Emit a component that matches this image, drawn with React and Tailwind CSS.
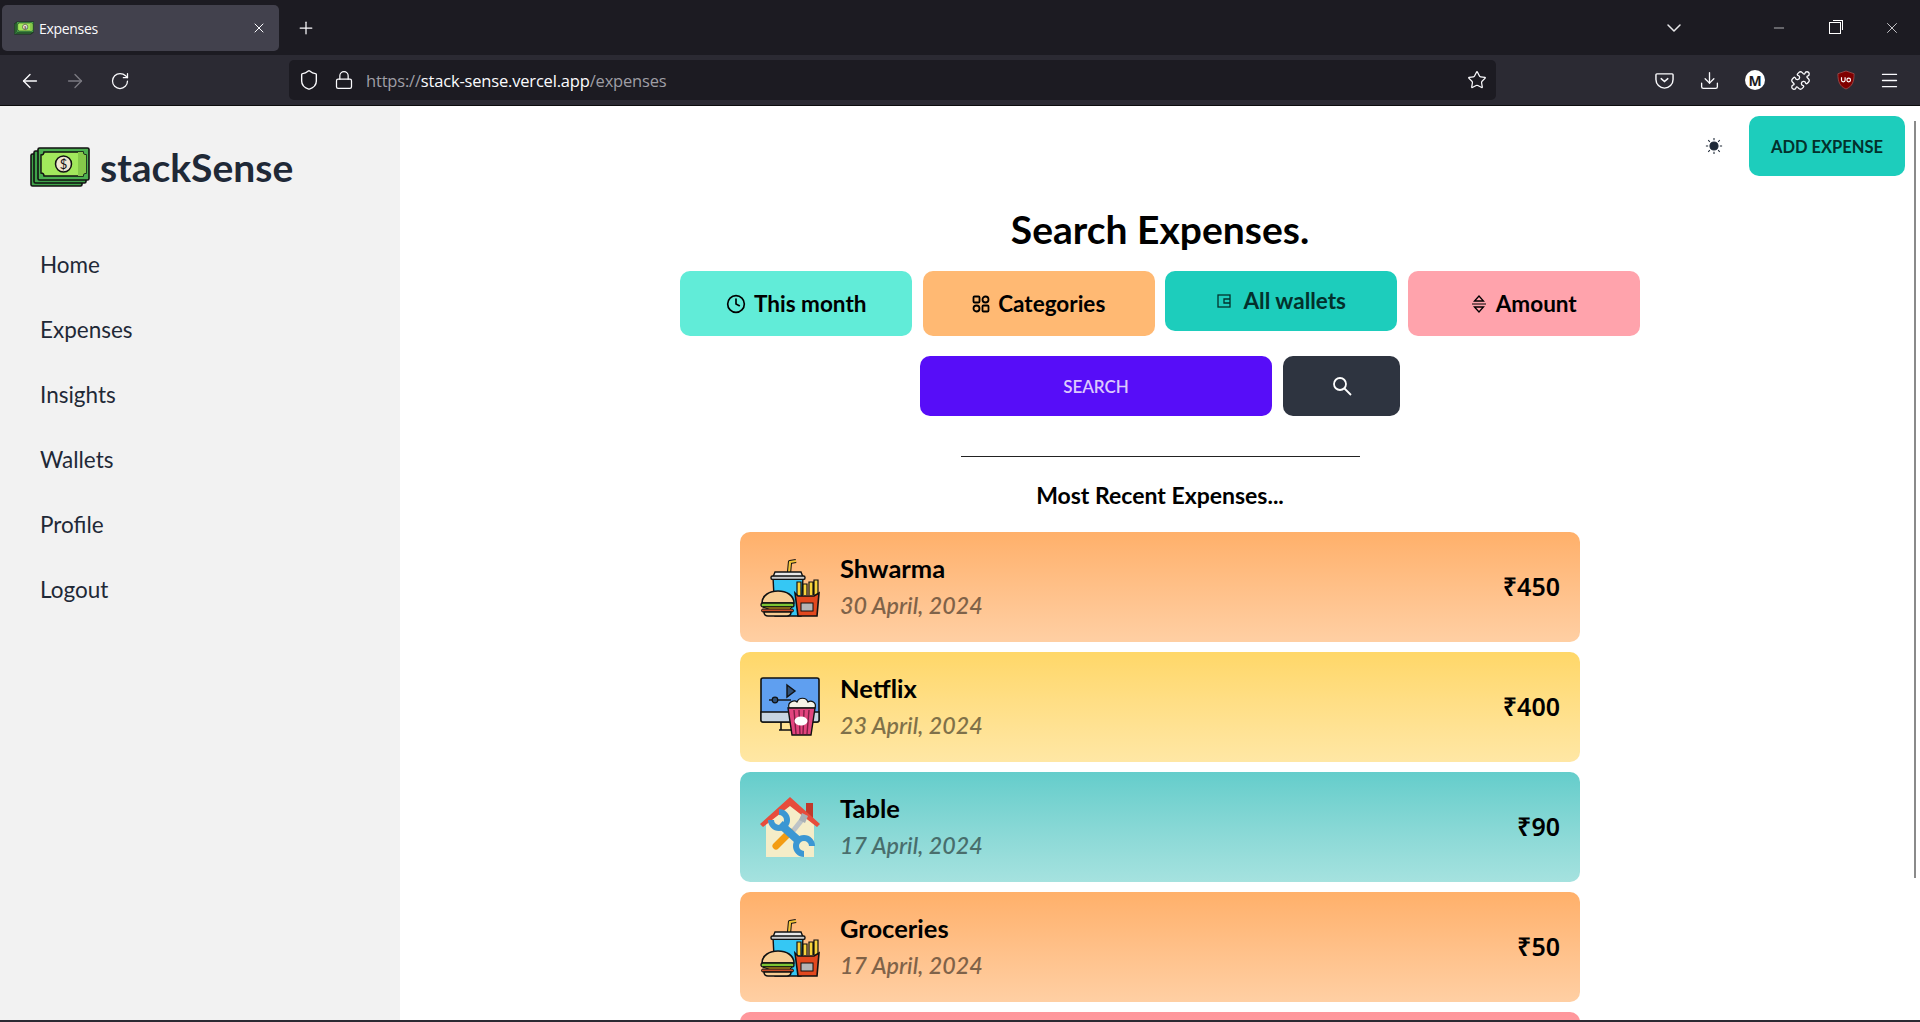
import { ArrowLeft, ArrowRight, RotateCw, Shield, Lock, Star, Download, Puzzle, Menu, ChevronDown, Minus, X, Plus, Clock } from "lucide-react";

const MoneyIcon = ({ className }) => (
  <svg viewBox="0 0 60 40" className={className}>
    <rect x="1" y="7" width="51" height="32" rx="1.500" fill="#3fa34a" stroke="#111" strokeWidth="1.600" />
    <rect x="4" y="4" width="52" height="32" rx="1.500" fill="#3fa34a" stroke="#111" strokeWidth="1.600" />
    <rect x="8" y="1" width="51" height="32" rx="1.500" fill="#4caf50" stroke="#111" strokeWidth="1.600" />
    <path d="M14 5h39a3 3 0 0 0 3 3v18a3 3 0 0 0-3 3H14a3 3 0 0 0-3-3V8a3 3 0 0 0 3-3z" fill="#a2e85c" stroke="#111" strokeWidth="1.400" />
    <path d="M48 5h5a3 3 0 0 0 3 3v18a3 3 0 0 0-3 3h-5z" fill="#86c94a" />
    <circle cx="33.500" cy="17" r="8" fill="#efe6d2" stroke="#111" strokeWidth="1.500" />
    <text x="33.500" y="22" textAnchor="middle" fontSize="13" fontFamily="Lato, sans-serif" fill="#111">$</text>
  </svg>
);

const FoodIcon = () => (
  <svg viewBox="0 0 60 60" className="w-[60px] h-[60px] shrink-0">
    <path d="M29 16l1-11 6-1" fill="none" stroke="#111" strokeWidth="4.200" strokeLinejoin="round" />
    <path d="M29 16l1-11 6-1" fill="none" stroke="#f5c63a" strokeWidth="2.200" strokeLinejoin="round" />
    <path d="M13 20h30l-2 39H15z" fill="#35c7f4" stroke="#111" strokeWidth="1.400" />
    <path d="M13 20l2-5h26l2 5z" fill="#e8e8e8" stroke="#111" strokeWidth="1.400" />
    <rect x="11" y="19" width="34" height="3.400" rx="1.500" fill="#cfcfcf" stroke="#111" strokeWidth="1.400" />
    <path d="M37 38V25h4v13M43 38V27h4v11M49 38V25h4v13M54 38V23h4v15" fill="#f8d33c" stroke="#111" strokeWidth="1.200" />
    <path d="M35 36l3 3h16l5-3-2 23H38z" fill="#e2491f" stroke="#111" strokeWidth="1.600" />
    <rect x="41" y="46" width="12" height="8" fill="#b5b5b5" stroke="#111" strokeWidth="1" />
    <path d="M2 46c0-16 32-16 32 0z" fill="#f8cd93" stroke="#111" strokeWidth="1.600" />
    <rect x="1" y="46" width="33" height="4" rx="2" fill="#7cc433" stroke="#111" strokeWidth="1.300" />
    <path d="M3 50h29l-3 3-4 1-4-1-5 1-5-1z" fill="#f5b91f" stroke="#111" strokeWidth="1" />
    <rect x="1.500" y="52" width="32" height="3" rx="1.500" fill="#c9502a" stroke="#111" strokeWidth="1" />
    <path d="M4 55h27c0 3-2 4-4 4H8c-2 0-4-1-4-4z" fill="#f8cd93" stroke="#111" strokeWidth="1.600" />
  </svg>
);

const MovieIcon = () => (
  <svg viewBox="0 0 60 60" className="w-[60px] h-[60px] shrink-0">
    <path d="M21 45v8M19 53h12" stroke="#111" strokeWidth="1.600" fill="none" />
    <rect x="1" y="1" width="58" height="44" rx="2" fill="#5f9ff0" stroke="#111" strokeWidth="1.600" />
    <path d="M1 35h58v8a2 2 0 0 1-2 2H3a2 2 0 0 1-2-2z" fill="#c7d5e2" stroke="#111" strokeWidth="1.400" />
    <path d="M27 8l8 6-8 6z" fill="#2e4f78" stroke="#111" strokeWidth="1.400" />
    <path d="M9 23h22" stroke="#111" strokeWidth="1.400" />
    <circle cx="15" cy="23" r="2.800" fill="#2e4f78" stroke="#111" strokeWidth="1.200" />
    <path d="M29 31c-2-7 6-8 8-6 2-5 9-5 11 0 3-2 9 0 7 6z" fill="#f6f3e8" stroke="#111" strokeWidth="1.200" />
    <path d="M28 31h27l-4 27H32z" fill="#e2447e" stroke="#111" strokeWidth="1.400" />
    <path d="M34 33l2 24M39 33l1 24M44 33l-1 24M49 33l-2 24" stroke="#7d1f44" strokeWidth="1.400" />
    <ellipse cx="41" cy="44" rx="6.500" ry="4.500" fill="#fff" />
  </svg>
);

const RepairIcon = () => (
  <svg viewBox="0 0 60 60" className="w-[60px] h-[60px] shrink-0">
    <rect x="46" y="6" width="7" height="17" fill="#c0392b" />
    <path d="M6 26L30 6l24 20v34H6z" fill="#f5edc8" />
    <path d="M0 27L30 0l30 27-3 3L30 9 3 30z" fill="#e74c3c" />
    <path d="M45 23l-12 15-4-3 12-15z" fill="#bdc3c7" />
    <path d="M42 16l6 3-3 7-6-3z" fill="#a9b0b5" />
    <path d="M30 35L16 49" stroke="#f39c12" strokeWidth="7" strokeLinecap="round" />
    <path d="M20 27l20 18" stroke="#3b97d3" strokeWidth="8" />
    <path d="M19 15A8 8 0 1 1 11 23" fill="none" stroke="#3b97d3" strokeWidth="6" />
    <path d="M52 49A8 8 0 1 0 44 57" fill="none" stroke="#3b97d3" strokeWidth="6" />
  </svg>
);

const items = [
  { title: "Shwarma", date: "30 April, 2024", amount: "₹450", bg: "from-[#ffb06a] to-[#ffcfa3]", icon: <FoodIcon /> },
  { title: "Netflix", date: "23 April, 2024", amount: "₹400", bg: "from-[#ffd768] to-[#ffe7a4]", icon: <MovieIcon /> },
  { title: "Table", date: "17 April, 2024", amount: "₹90", bg: "from-[#64cdcb] to-[#a5e2df]", icon: <RepairIcon /> },
  { title: "Groceries", date: "17 April, 2024", amount: "₹50", bg: "from-[#ffb06a] to-[#ffcfa3]", icon: <FoodIcon /> },
];

const navLinks = ["Home", "Expenses", "Insights", "Wallets", "Profile", "Logout"];

const BrowserChrome = () => (
  <div className="shrink-0 font-['Open_Sans',sans-serif] text-[#fbfbfe]">
    {/* Tab strip */}
    <div className="h-[55px] bg-[#1c1b22] flex items-center">
      <div className="ml-[2px] mt-[1px] w-[277px] h-[46px] bg-[#42414d] rounded-[5px] flex items-center pl-[12px] pr-[12px]">
        <MoneyIcon className="w-[20px] h-[14px] shrink-0" />
        <span className="ml-[5px] text-[14px] tracking-[-0.3px]">Expenses</span>
        <X size={16} strokeWidth={1.500} className="ml-auto" />
      </div>
      <Plus size={20} strokeWidth={1.500} className="ml-[17px]" />
      <ChevronDown size={24} strokeWidth={1.500} className="ml-auto mr-[85px] text-[#e8e8ea]" />
      <Minus size={16} strokeWidth={1} className="mr-[42px]" />
      <div className="relative w-[12px] h-[12px] border border-white mr-[42px]">
        <div className="absolute -top-[3px] -right-[3px] w-[10px] h-[10px] border-t border-r border-white" />
      </div>
      <X size={18} strokeWidth={1} className="mr-[19px]" />
    </div>
    {/* Toolbar */}
    <div className="h-[50px] bg-[#2b2a33] flex items-center">
      <ArrowLeft size={22} strokeWidth={1.500} className="ml-[19px] mt-[1px]" />
      <ArrowRight size={22} strokeWidth={1.500} className="ml-[23px] mt-[1px] text-[#7b7a82]" />
      <RotateCw size={20} strokeWidth={1.500} className="ml-[24px] mt-[1px]" />
      <div className="ml-[159px] w-[1207px] h-[40px] bg-[#1c1b22] rounded-[5px] flex items-center pl-[9px] pr-[9px]">
        <Shield size={22} strokeWidth={1.500} />
        <Lock size={20} strokeWidth={1.500} className="ml-[14px]" />
        <span className="ml-[12px] mt-[2px] text-[16.5px] tracking-[-0.18px] text-[#9f9ea5]">
          https://<span className="text-[#fbfbfe]">stack-sense.vercel.app</span>/expenses
        </span>
        <Star size={20} strokeWidth={1.500} className="ml-auto" />
      </div>
      <svg viewBox="0 0 20 20" className="ml-[159px] w-[19px] h-[19px]" fill="none" stroke="currentColor" strokeWidth="1.500">
        <path d="M2 3h16a1 1 0 0 1 1 1v5a9 9 0 0 1-18 0V4a1 1 0 0 1 1-1z" />
        <path d="M6.500 8l3.500 3 3.500-3" strokeLinecap="round" />
      </svg>
      <Download size={21} strokeWidth={1.500} className="ml-[25px]" />
      <div className="ml-[25px] w-[20px] h-[20px] rounded-full bg-white text-[#1c1b22] text-[14px] font-bold flex items-center justify-center">M</div>
      <Puzzle size={21} strokeWidth={1.500} className="ml-[25px]" />
      <svg viewBox="0 0 20 22" className="ml-[26px] w-[18px] h-[20px]">
        <path d="M10 1l9 3c0 9-2 14-9 17C3 18 1 13 1 4z" fill="#800000" stroke="#a55" strokeWidth=".8" />
        <path d="M5 8v3a2 2 0 0 0 4 0V8M11 11a2 2 0 1 0 4 0 2 2 0 1 0-4 0" fill="none" stroke="#fff" strokeWidth="1.300" />
      </svg>
      <Menu size={21} strokeWidth={1.500} className="ml-[24px]" />
    </div>
    <div className="h-[1px] bg-[#0c0c0d]" />
  </div>
);

const Sidebar = () => (
  <aside className="w-[400px] shrink-0 bg-[#f2f2f2] text-[#1f2937]">
    <div className="h-[122px] pl-[30px] flex items-center">
      <MoneyIcon className="w-[60px] h-[40px]" />
      <span className="ml-[10px] text-[39px] font-bold leading-none">stackSense</span>
    </div>
    <ul className="pt-[4px] pl-[40px]">
      {navLinks.map((link) => (
        <li key={link} className="h-[65px] flex items-center text-[22.5px]">{link}</li>
      ))}
    </ul>
  </aside>
);

const FilterButton = ({ className, children }) => (
  <button className={`flex items-center justify-center gap-[8px] rounded-[10px] text-[22.5px] font-bold ${className}`}>
    {children}
  </button>
);

export default function App() {
  return (
    <div className="h-[1022px] flex flex-col overflow-hidden bg-[#1c1b22] font-['Lato',sans-serif]">
      <BrowserChrome />
      <div className="h-[914px] flex bg-white overflow-hidden">
        <Sidebar />
        <main className="relative flex-1 min-w-0 overflow-hidden text-black">
          {/* Top actions */}
          <div className="pt-[10px] pr-[15px] flex justify-end items-center">
            <svg viewBox="0 0 20 20" className="w-[18px] h-[18px] mr-[26px]" fill="#1f2937" stroke="#1f2937" strokeWidth="1.200">
              <circle cx="10" cy="10" r="4.500" />
              <path d="M10 1v2.500M10 16.500V19M1 10h2.500M16.500 10H19M3.600 3.600l1.800 1.800M14.600 14.600l1.800 1.800M3.600 16.400l1.800-1.800M14.600 5.400l1.800-1.800" fill="none" />
            </svg>
            <button className="w-[156px] h-[60px] pt-[2px] rounded-[10px] bg-[#1dcdbc] text-[#03312c] text-[16.5px] font-bold">ADD EXPENSE</button>
          </div>

          <h1 className="mt-[30px] text-center text-[39px] font-bold leading-[46px]">Search Expenses.</h1>

          {/* Filters */}
          <div className="mt-[19px] flex justify-center items-start gap-[10.5px]">
            <FilterButton className="w-[232px] h-[65px] bg-[#61ecd8]">
              <Clock size={20} strokeWidth={2} />
              This month
            </FilterButton>
            <FilterButton className="w-[232px] h-[65px] bg-[#ffb973]">
              <svg viewBox="0 0 18 18" className="w-[18px] h-[18px]" fill="none" stroke="#000" strokeWidth="1.800">
                <rect x="1.500" y="1.500" width="6" height="6" rx="1" />
                <circle cx="13.500" cy="4.500" r="3" />
                <circle cx="4.500" cy="13.500" r="3" />
                <rect x="10.500" y="10.500" width="6" height="6" rx="1" />
              </svg>
              Categories
            </FilterButton>
            <FilterButton className="w-[232px] h-[60px] bg-[#1dcdbc] text-[#03312c] gap-[13px]">
              <svg viewBox="0 0 14 14" className="w-[14px] h-[14px]" fill="none" stroke="#03312c" strokeWidth="1.300">
                <rect x="1" y="1" width="12" height="12" />
                <path d="M13 5H7v4h6" />
              </svg>
              All wallets
            </FilterButton>
            <FilterButton className="w-[232px] h-[65px] bg-[#ffa3ac] gap-[9px]">
              <svg viewBox="0 0 16 18" className="w-[16px] h-[18px]" fill="none" stroke="#000" strokeWidth="1.300">
                <path d="M3.500 6l4.500-5 4.500 5z" />
                <path d="M1 9h14" strokeWidth="1" />
                <path d="M3.500 12l4.500 5 4.500-5z" />
              </svg>
              Amount
            </FilterButton>
          </div>

          {/* Search */}
          <div className="mt-[20px] flex justify-center gap-[11px]">
            <button className="w-[352px] h-[60px] pt-[1px] rounded-[10px] bg-[#570df8] text-[#dcc8fe] text-[17px] font-semibold">SEARCH</button>
            <button className="w-[117px] h-[60px] rounded-[10px] bg-[#2e3440] flex items-center justify-center">
              <svg viewBox="0 0 20 20" className="w-[20px] h-[20px]" fill="none" stroke="#fff" strokeWidth="1.800">
                <circle cx="8" cy="8" r="6" />
                <path d="M12.500 12.500L19 19" />
              </svg>
            </button>
          </div>

          <div className="mt-[40px] mx-auto w-[399px] h-[1px] bg-[#222]" />
          <h2 className="mt-[24px] text-center text-[23px] font-bold leading-[28px]">Most Recent Expenses...</h2>

          {/* Expense list */}
          <div className="mt-[23px] mx-auto w-[840px] flex flex-col gap-[10px]">
            {items.map((item) => (
              <div key={item.title} className={`shrink-0 h-[110px] rounded-[10px] bg-gradient-to-b ${item.bg} flex items-center pl-[20px] pr-[20px]`}>
                {item.icon}
                <div className="ml-[20px] pb-[1px] flex flex-col gap-[2.5px]">
                  <div className="text-[25.5px] font-bold leading-[34px]">{item.title}</div>
                  <div className="text-[23.3px] italic font-semibold leading-[34px] text-black/50">{item.date}</div>
                </div>
                <div className="ml-auto text-[25px] font-semibold font-['Noto_Sans',sans-serif]">{item.amount}</div>
              </div>
            ))}
            {/* Next card, only its top edge is in view */}
            <div className="shrink-0 h-[110px] rounded-[10px] bg-gradient-to-b from-[#ff969b] to-[#ffc4c7]" />
          </div>

          {/* Scrollbar thumb */}
          <div className="absolute top-[15px] right-[4px] w-[2px] h-[757px] bg-[#8a8a8a]" />
        </main>
      </div>
      <div className="h-[2px] bg-[#2b2a33]" />
    </div>
  );
}
